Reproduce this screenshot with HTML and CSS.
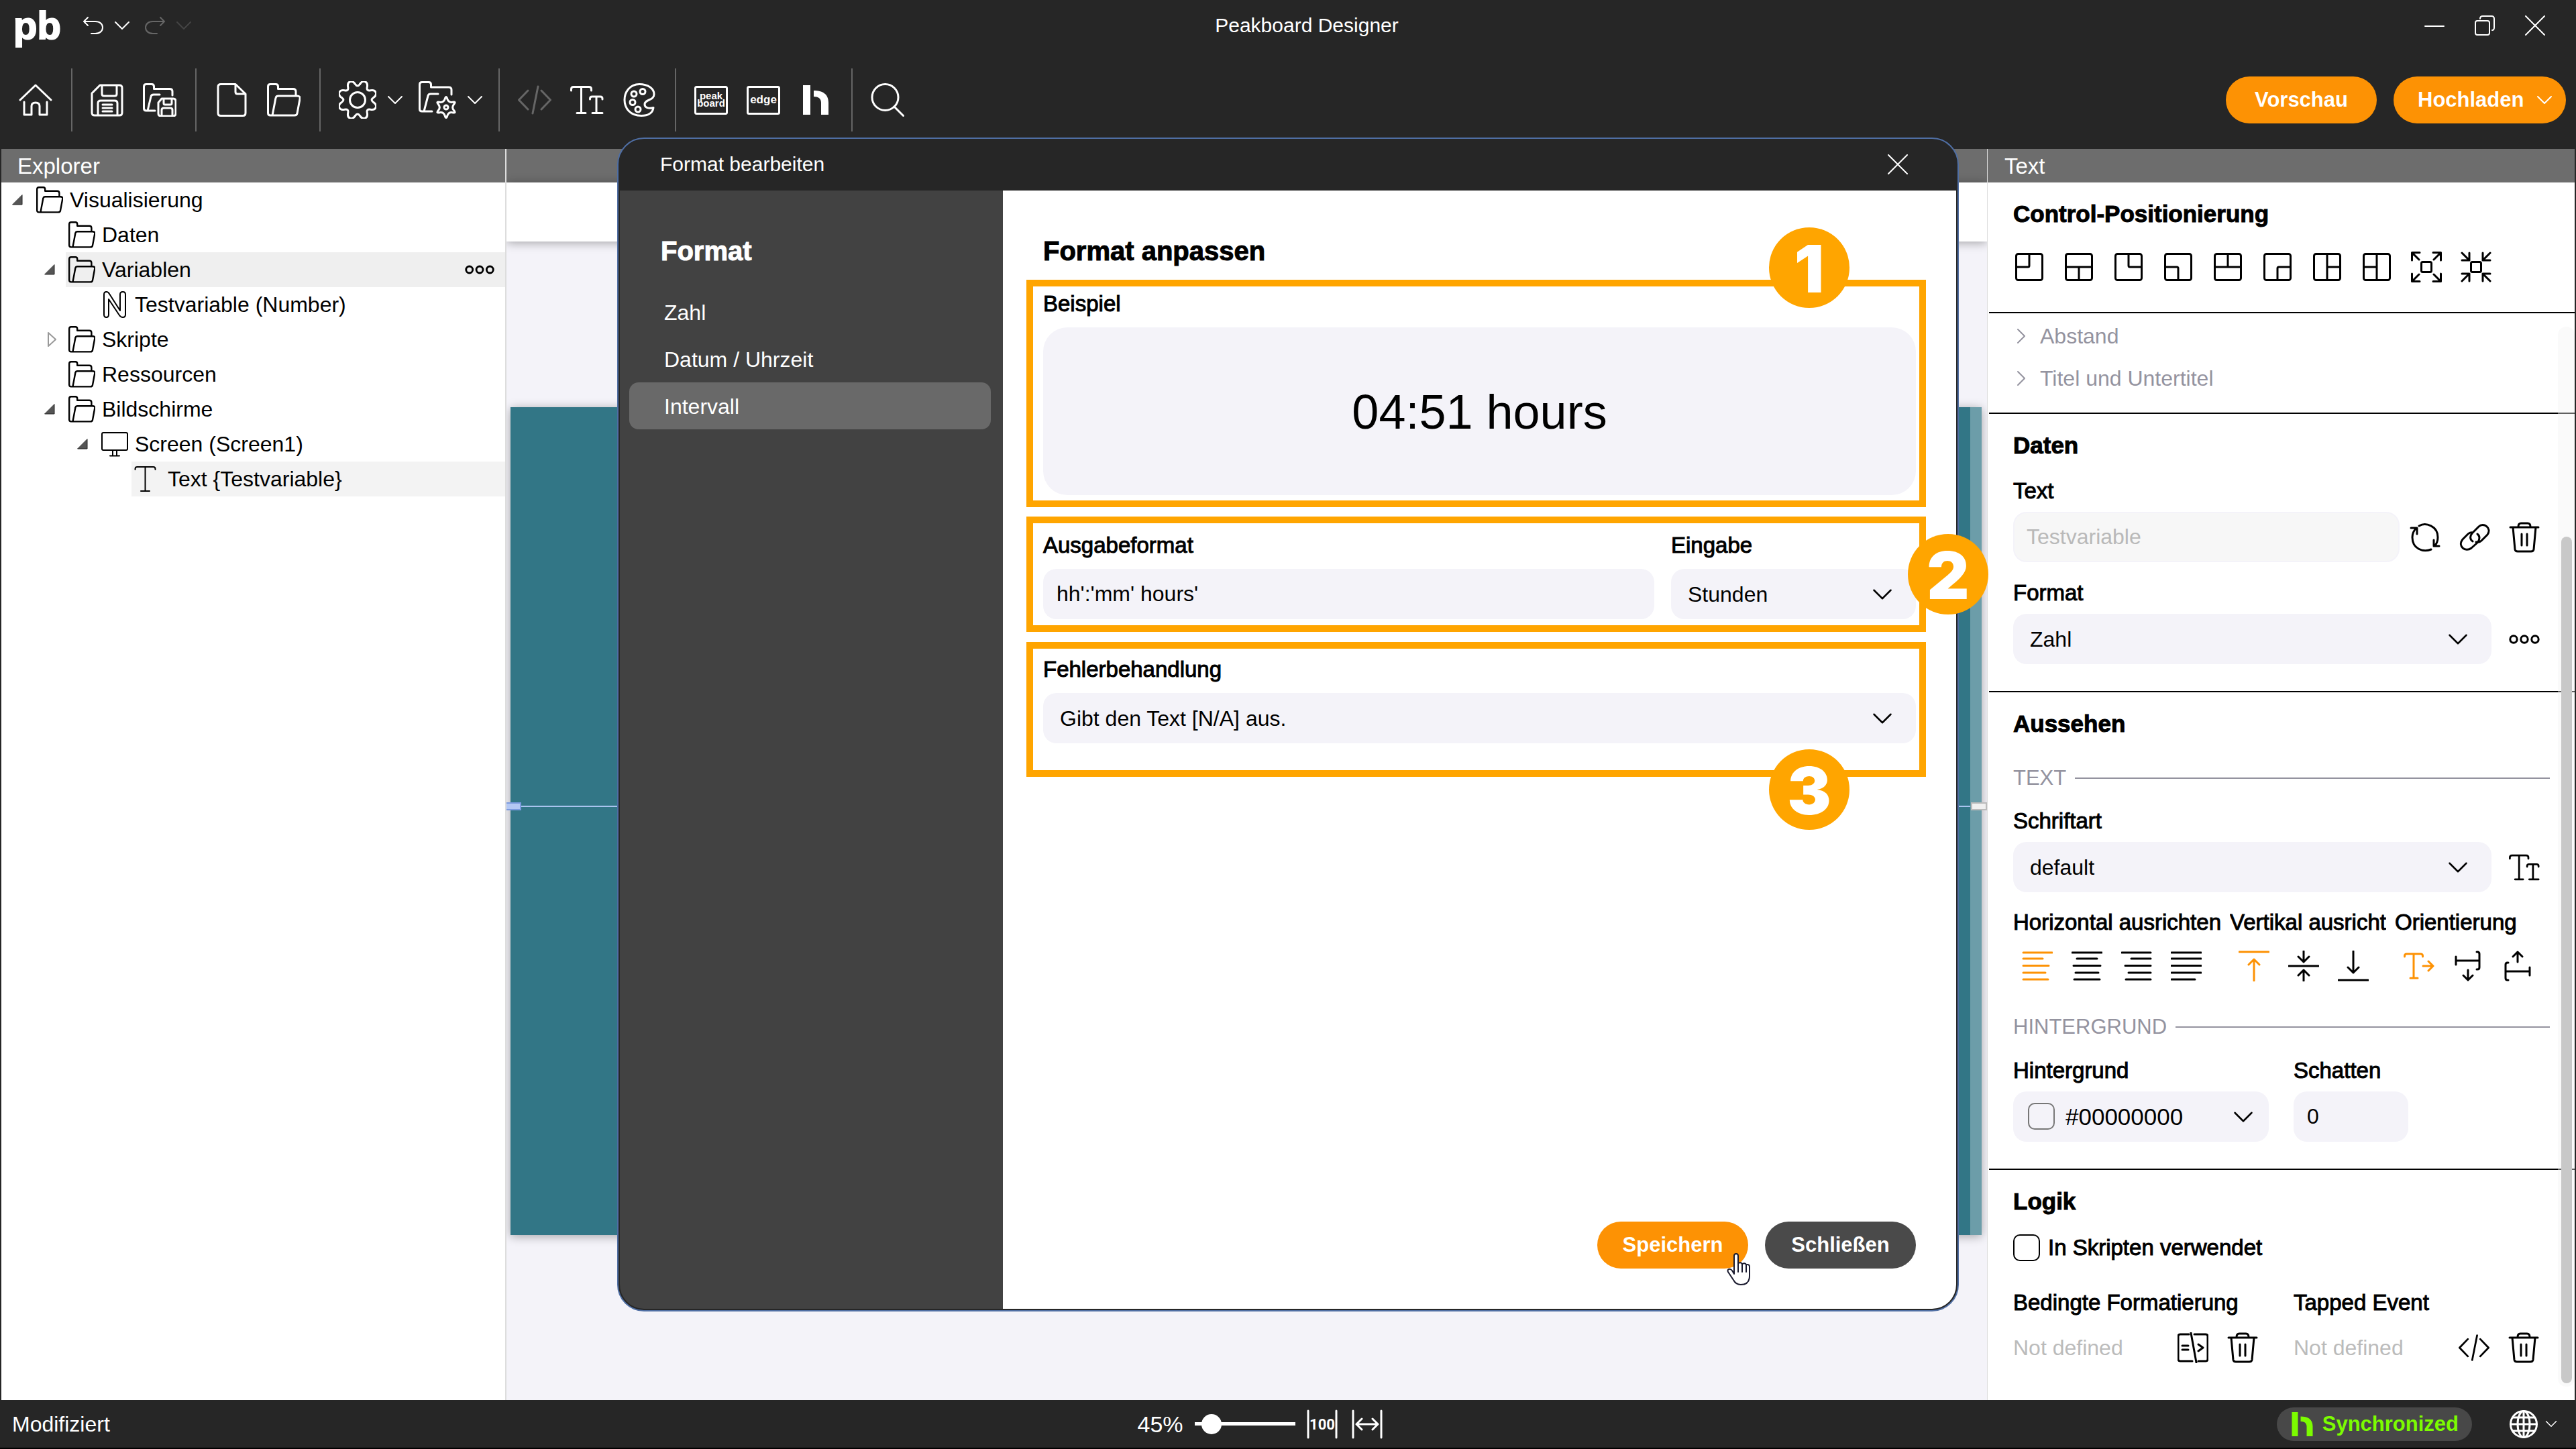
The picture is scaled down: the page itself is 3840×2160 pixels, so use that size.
FILE: index.html
```html
<!DOCTYPE html>
<html lang="de">
<head>
<meta charset="utf-8">
<title>Peakboard Designer</title>
<link rel="stylesheet" href="styles.css">
</head>
<body>
<svg class="sprite" aria-hidden="true">
  <symbol id="chevron" viewBox="0 0 24 14"><path d="M2 2 12 12 22 2"/></symbol>
  <symbol id="undo" viewBox="0 0 32 28"><path d="M8 2 2 8l6 6M2 8h17c7 0 11 4 11 9s-4 9-11 9h-6"/></symbol>
  <symbol id="folder" viewBox="0 0 50 50"><path d="M8 48H5q-3.500 0-3.500-3.500V5q0-3.500 3.500-3.500h8q3.500 0 3.500 3.500v3.500H39q4 0 4 4V19M8 48l5-26q.5-3 4-3h28q5 0 4 4.500l-4 21.500q-.5 3-4 3z"/></symbol>
  <symbol id="home" viewBox="0 0 50 50"><path d="M2 25 25 3l23 22M8 28v19h11V34q0-5 6-5t6 5v13h11V28"/></symbol>
  <symbol id="save" viewBox="0 0 50 50"><path d="M14 3h29q4 0 4 4v37q0 4-4 4H6q-4 0-4-4V15zM17 3v13q0 3 3 3h16q3 0 3-3V3M11 48V30q0-4 4-4h21q4 0 4 4v18M18 32h14M18 37h14M18 42h14"/></symbol>
  <symbol id="save-as" viewBox="0 0 50 50"><path d="M18 41H5q-3.500 0-3.500-3.500V5q0-3.500 3.500-3.500h8q3.500 0 3.500 3.500v3.500H40q4 0 4 4V18M7 41l5-21q.5-3 4-3h9M28 23h17q4 0 4 4v18q0 4-4 4H27q-4 0-4-4V29zM31 23v7q0 2 2 2h8q2 0 2-2v-7M28 49V40q0-3 3-3h10q3 0 3 3v9"/></symbol>
  <symbol id="new" viewBox="0 0 50 50"><path d="M31 1.500H9q-4 0-4 4v39q0 4 4 4h33q4 0 4-4V16zM31 1.500V13q0 3 3 3h12"/></symbol>
  <symbol id="gear" viewBox="0 0 56 56"><g transform="translate(28 28)">
    <path id="gq" d="M3.500-23.700Q7-29 11.300-27.200 15.500-25.500 14.300-19.300 13-13 19.300-14.300 25.500-15.500 27.200-11.300 29-7 23.700-3.500 18.500 0 23.700 3.500"/>
    <use href="#gq" transform="rotate(90)"/><use href="#gq" transform="rotate(180)"/><use href="#gq" transform="rotate(270)"/><circle r="11.500"/></g></symbol>
  <symbol id="folder-gear" viewBox="0 0 56 56"><path d="M20 45H5q-3.500 0-3.500-3.500V5q0-3.500 3.500-3.500h10q3.500 0 3.500 3.500v4H45q4 0 4 4v7M8 45l6-23q.5-3 4-3h11"/><g transform="translate(41 39)"><path d="M-2-12Q0-19 2-12 4-7 9.400-7.700 15.700-9 11.400-4.300 8 0 11.400 4.300 15.700 9 9.400 7.700 4 7 2 12 0 19-2 12-4 7-9.400 7.700-15.700 9-11.400 4.300-8 0-11.400-4.300-15.700-9-9.400-7.700-4-7-2-12z"/><circle r="3"/></g></symbol>
  <symbol id="code" viewBox="0 0 50 50"><path d="M15 11 1.500 25 15 39M35 11l13.500 14L35 39M30 5l-8 40"/></symbol>
  <symbol id="type" viewBox="0 0 50 50"><path d="M1.500 11V9q0-3.500 3.500-3.500h23q3.500 0 3.500 3.500v2M16.500 5.500v39M10 44.500h13M29.500 24v-1q0-3 3-3H45q3 0 3 3v1M39 20v24.500M33 44.500h15"/></symbol>
  <symbol id="palette" viewBox="0 0 50 50"><path d="M25 1.500C11 1.500 3 13 3 25s8 23.500 25 23.500c10 0 17-4 18-12-7 2-13 0-13-5 0-8 14-5 14-15C47 8 38 1.500 25 1.500z"/><circle cx="17" cy="16" r="4"/><circle cx="30" cy="12.500" r="4"/><circle cx="15" cy="28.500" r="4"/><circle cx="23" cy="39" r="4"/></symbol>
  <symbol id="frame" viewBox="0 0 50 50"><rect x="1.500" y="5.500" width="47" height="40" rx="2"/></symbol>
  <symbol id="hub" viewBox="0 0 38 44"><path d="M0 0h11v44H0zM16 8c13 0 22 5 22 18v18H27V26c0-6-4-9-11-9z" fill="currentColor" stroke="none"/></symbol>
  <symbol id="search" viewBox="0 0 50 50"><circle cx="21.500" cy="21" r="19.500"/><path d="m35 35 13.500 13.500"/></symbol>
  <symbol id="dots" viewBox="0 0 46 14"><circle cx="7" cy="7" r="5.200"/><circle cx="23" cy="7" r="5.200"/><circle cx="39" cy="7" r="5.200"/></symbol>
  <symbol id="close" viewBox="0 0 30 30"><path d="m1 1 28 28M29 1 1 29"/></symbol>
  <symbol id="open" viewBox="0 0 16 16"><path d="M15 1v14H1z" fill="#555" stroke="#222"/></symbol>
  <symbol id="shut" viewBox="0 0 16 24"><path d="M2 2v20l11-10z" stroke="#999"/></symbol>
  <symbol id="number" viewBox="0 0 40 40"><path d="M4 35V5q0-4 3.500-4 3 0 4.500 3l16 25V5q0-4 4-4t4 4v30q0 4-4 4-3 0-5-3L11 12v23q0 4-3.500 4T4 35z"/></symbol>
  <symbol id="screen" viewBox="0 0 40 40"><rect x="1" y="3" width="38" height="26" rx="2"/><path d="M17 29v8M23 29v8M13 37.500h14"/></symbol>
  <symbol id="letter" viewBox="0 0 40 40"><path d="M1.500 6V5q0-3 3-3h24q3 0 3 3v1M16.500 2v36M10 38h13"/></symbol>
  <symbol id="box" viewBox="0 0 42 42"><rect x="1.500" y="1.500" width="39" height="39" rx="3"/></symbol>
  <symbol id="p1" viewBox="0 0 42 42"><use href="#box"/><path d="M21 1v18q0 2-2 2H1"/></symbol>
  <symbol id="p2" viewBox="0 0 42 42"><use href="#box"/><path d="M1 21h40M21 21v20"/></symbol>
  <symbol id="p3" viewBox="0 0 42 42"><use href="#box"/><path d="M21 1v18q0 2 2 2h18"/></symbol>
  <symbol id="p4" viewBox="0 0 42 42"><use href="#box"/><path d="M1 21h18q2 0 2 2v18"/></symbol>
  <symbol id="p5" viewBox="0 0 42 42"><use href="#box"/><path d="M1 21h40M21 1v20"/></symbol>
  <symbol id="p6" viewBox="0 0 42 42"><use href="#box"/><path d="M41 21H23q-2 0-2 2v18"/></symbol>
  <symbol id="p7" viewBox="0 0 42 42"><use href="#box"/><path d="M21 1v40M21 21h20"/></symbol>
  <symbol id="p8" viewBox="0 0 42 42"><use href="#box"/><path d="M21 1v40M1 21h20"/></symbol>
  <symbol id="grow" viewBox="0 0 46 46"><rect x="15.500" y="15.500" width="15" height="15" rx="2"/><path d="M1.500 13V1.500H13M2 2l10 10M33 1.500h11.500V13M44 2 34 12M1.500 33v11.500H13M2 44l10-10M33 44.500h11.500V33M44 44 34 34"/></symbol>
  <symbol id="shrink" viewBox="0 0 46 46"><rect x="15.500" y="15.500" width="15" height="15" rx="2"/><path d="M13 2v11H2M2 2l11 11M33 2v11h11M44 2 33 13M2 33h11v11M2 44l11-11M44 33H33v11M44 44 33 33"/></symbol>
  <symbol id="refresh" viewBox="0 0 46 46"><path d="M14 6C24 0 42 6 42 23c0 5-2 10-5 13M32 41C20 46 4 40 4 23 4 18 6 13 10 9M2 9h9v9M44 36h-8v-9"/></symbol>
  <symbol id="link" viewBox="0 0 46 46"><path d="M20 29c-5-3-4-9 0-13l9-9c7-7 20 2 13 12l-9 9c-2 2-5 3-8 2M27 18c4 3 4 8 0 13l-9 8C9 46-3 36 5 26l8-8c2-2 4-3 7-2"/></symbol>
  <symbol id="trash" viewBox="0 0 46 46"><path d="M2 8h42M14 7q0-5 4-5h10q4 0 4 5M6 8l3 33q.5 3 4 3h20q3.500 0 4-3l3-33M19 18v17M27 18v17"/></symbol>
  <symbol id="al" viewBox="0 0 46 46"><path d="M2 3h43M2 12h29M2 22.500h38M2 33h33M2 43h37"/></symbol>
  <symbol id="ac" viewBox="0 0 46 46"><path d="M1 3h44M8 12h30M3 22.500h40M6 33h34M4 43h38"/></symbol>
  <symbol id="ar" viewBox="0 0 46 46"><path d="M1 3h43M15 12h29M6 22.500h38M11 33h33M7 43h37"/></symbol>
  <symbol id="aj" viewBox="0 0 46 46"><path d="M1 3h44M1 12h44M1 22.500h44M1 33h44M1 43h35"/></symbol>
  <symbol id="vt" viewBox="0 0 46 46"><path d="M1 2h44M23 45V13M15 21l8-8 8 8"/></symbol>
  <symbol id="vm" viewBox="0 0 46 46"><path d="M1 23h44M23 1v15M15 9l8 8 8-8M23 45V30M15 37l8-8 8 8"/></symbol>
  <symbol id="vb" viewBox="0 0 46 46"><path d="M1 44h44M23 1v32M15 25l8 8 8-8"/></symbol>
  <symbol id="oh" viewBox="0 0 46 46"><path d="M1.500 9V8q0-3 3-3h21q3 0 3 3v1M15 5v36M10 41h11M29 23h15M37 16l7 7-7 7"/></symbol>
  <symbol id="od" viewBox="0 0 46 46"><path d="M35 2h1q3 0 3 3v20q0 3-3 3h-1M39 15H4M4 9v12M22 29v15M15 37l7 7 7-7"/></symbol>
  <symbol id="ou" viewBox="0 0 46 46"><path d="M8 18H7q-3 0-3 3v20q0 3 3 3h1M4 31h36M40 25v12M22 17V2M15 9l7-7 7 7"/></symbol>
  <symbol id="rule" viewBox="0 0 46 46"><path d="M17 3H4q-3 0-3 3v34q0 3 3 3h18M25 3h17q3 0 3 3v34q0 3-3 3H31M20 1l8 44M7 20h9M7 26h9M31 18l7 5-7 5"/></symbol>
  <symbol id="globe" viewBox="0 0 42 42"><circle cx="21" cy="21" r="19.500"/><ellipse cx="21" cy="21" rx="9" ry="19.500"/><path d="M1.500 21h39M21 1.500v39M5 11h32M5 31h32"/></symbol>
</svg>

<header class="titlebar">
  <span class="logo">pb</span>
  <button class="ic" aria-label="Rückgängig"><svg class="w32"><use href="#undo"/></svg></button>
  <button class="ic" aria-label="Rückgängig-Liste"><svg class="chev"><use href="#chevron"/></svg></button>
  <button class="ic dim" aria-label="Wiederholen" disabled><svg class="w32 flip"><use href="#undo"/></svg></button>
  <button class="ic dimmer" aria-label="Wiederholen-Liste" disabled><svg class="chev"><use href="#chevron"/></svg></button>
  <h1>Peakboard Designer</h1>
  <div class="winctl">
    <button class="ic" aria-label="Minimieren"><svg class="w30" viewBox="0 0 30 30"><path d="M1 16h28"/></svg></button>
    <button class="ic" aria-label="Verkleinern"><svg class="w30" viewBox="0 0 30 30"><rect x="1" y="8" width="21" height="21" rx="3"/><path d="M8 5q0-4 4-4h13q4 0 4 4v13q0 4-3 4"/></svg></button>
    <button class="ic" aria-label="Beenden"><svg class="w30"><use href="#close"/></svg></button>
  </div>
</header>

<nav class="toolbar" aria-label="Werkzeuge">
  <button class="ic" aria-label="Start"><svg class="w50"><use href="#home"/></svg></button>
  <i class="sep"></i>
  <button class="ic" aria-label="Speichern"><svg class="w50"><use href="#save"/></svg></button>
  <button class="ic" aria-label="Speichern unter"><svg class="w50"><use href="#save-as"/></svg></button>
  <i class="sep"></i>
  <button class="ic" aria-label="Neu"><svg class="w50"><use href="#new"/></svg></button>
  <button class="ic" aria-label="Öffnen"><svg class="w50"><use href="#folder"/></svg></button>
  <i class="sep"></i>
  <button class="ic drop" aria-label="Einstellungen"><svg class="w56"><use href="#gear"/></svg><svg class="chev"><use href="#chevron"/></svg></button>
  <button class="ic drop" aria-label="Projekteinstellungen"><svg class="w56"><use href="#folder-gear"/></svg><svg class="chev"><use href="#chevron"/></svg></button>
  <i class="sep"></i>
  <button class="ic dim" aria-label="Skript" disabled><svg class="w50"><use href="#code"/></svg></button>
  <button class="ic" aria-label="Schriften"><svg class="w50"><use href="#type"/></svg></button>
  <button class="ic" aria-label="Farben"><svg class="w50"><use href="#palette"/></svg></button>
  <i class="sep"></i>
  <button class="ic" aria-label="Peakboard"><svg class="w50 badge" viewBox="0 0 50 50"><use href="#frame"/><text x="25" y="24">peak</text><text x="25" y="35">board</text></svg></button>
  <button class="ic" aria-label="Edge"><svg class="w50 badge edge" viewBox="0 0 50 50"><use href="#frame"/><text x="25" y="30">edge</text></svg></button>
  <button class="ic" aria-label="Hub"><svg class="w50 hub"><use href="#hub"/></svg></button>
  <i class="sep"></i>
  <button class="ic" aria-label="Suchen"><svg class="w50"><use href="#search"/></svg></button>
  <div class="actions">
    <button class="pill">Vorschau</button>
    <button class="pill upload">Hochladen <svg class="chev"><use href="#chevron"/></svg></button>
  </div>
</nav>

<main class="workspace">
  <aside class="explorer">
    <h2 class="bar">Explorer</h2>
    <ul class="tree">
      <li class="l0"><svg class="arrow"><use href="#open"/></svg><span class="node"><svg><use href="#folder"/></svg>Visualisierung</span></li>
      <li class="l1"><span class="node"><svg><use href="#folder"/></svg>Daten</span></li>
      <li class="l1"><svg class="arrow"><use href="#open"/></svg><span class="node hover"><svg><use href="#folder"/></svg>Variablen<button class="ic more" aria-label="Mehr"><svg class="dots"><use href="#dots"/></svg></button></span></li>
      <li class="l2"><span class="node"><svg><use href="#number"/></svg>Testvariable (Number)</span></li>
      <li class="l1"><svg class="arrow shut"><use href="#shut"/></svg><span class="node"><svg><use href="#folder"/></svg>Skripte</span></li>
      <li class="l1"><span class="node"><svg><use href="#folder"/></svg>Ressourcen</span></li>
      <li class="l1"><svg class="arrow"><use href="#open"/></svg><span class="node"><svg><use href="#folder"/></svg>Bildschirme</span></li>
      <li class="l2"><svg class="arrow"><use href="#open"/></svg><span class="node"><svg><use href="#screen"/></svg>Screen (Screen1)</span></li>
      <li class="l3"><span class="node picked"><svg><use href="#letter"/></svg>Text {Testvariable}</span></li>
    </ul>
  </aside>

  <section class="stage" aria-label="Bildschirm">
    <div class="bar"></div>
    <div class="ruler"></div>
    <div class="area"><div class="canvas"><i class="guide"></i><i class="grip start"></i><i class="grip end"></i></div></div>
  </section>

  <aside class="props">
    <h2 class="bar">Text</h2>
    <section>
      <h3>Control-Positionierung</h3>
      <div class="positions">
        <button class="ic" aria-label="Oben links"><svg class="w42"><use href="#p1"/></svg></button>
        <button class="ic" aria-label="Unten"><svg class="w42"><use href="#p2"/></svg></button>
        <button class="ic" aria-label="Oben rechts"><svg class="w42"><use href="#p3"/></svg></button>
        <button class="ic" aria-label="Unten links"><svg class="w42"><use href="#p4"/></svg></button>
        <button class="ic" aria-label="Oben"><svg class="w42"><use href="#p5"/></svg></button>
        <button class="ic" aria-label="Unten rechts"><svg class="w42"><use href="#p6"/></svg></button>
        <button class="ic" aria-label="Rechts"><svg class="w42"><use href="#p7"/></svg></button>
        <button class="ic" aria-label="Links"><svg class="w42"><use href="#p8"/></svg></button>
        <button class="ic" aria-label="Vergrößern"><svg class="w46"><use href="#grow"/></svg></button>
        <button class="ic" aria-label="Verkleinern"><svg class="w46"><use href="#shrink"/></svg></button>
      </div>
    </section>
    <section class="folds">
      <button class="fold"><svg class="chev"><use href="#chevron"/></svg>Abstand</button>
      <button class="fold"><svg class="chev"><use href="#chevron"/></svg>Titel und Untertitel</button>
    </section>
    <section>
      <h3>Daten</h3>
      <label class="lbl first" for="text">Text</label>
      <div class="row tight">
        <input class="field" id="text" value="Testvariable" disabled>
        <button class="ic" aria-label="Aktualisieren"><svg class="w46"><use href="#refresh"/></svg></button>
        <button class="ic" aria-label="Verknüpfen"><svg class="w46"><use href="#link"/></svg></button>
        <button class="ic" aria-label="Löschen"><svg class="w46"><use href="#trash"/></svg></button>
      </div>
      <label class="lbl" for="format">Format</label>
      <div class="row">
        <span class="select"><select class="field" id="format"><option>Zahl</option></select><svg class="chev"><use href="#chevron"/></svg></span>
        <button class="ic" aria-label="Format bearbeiten"><svg class="dots"><use href="#dots"/></svg></button>
      </div>
    </section>
    <section>
      <h3>Aussehen</h3>
      <h4>TEXT</h4>
      <label class="lbl" for="font">Schriftart</label>
      <div class="row">
        <span class="select"><select class="field" id="font"><option>default</option></select><svg class="chev"><use href="#chevron"/></svg></span>
        <button class="ic" aria-label="Schriften"><svg class="w46"><use href="#type"/></svg></button>
      </div>
      <div class="aligns">
        <div class="group h"><span class="lbl">Horizontal ausrichten</span><div class="set">
          <button class="ic on" aria-label="Links"><svg class="w46"><use href="#al"/></svg></button>
          <button class="ic" aria-label="Zentriert"><svg class="w46"><use href="#ac"/></svg></button>
          <button class="ic" aria-label="Rechts"><svg class="w46"><use href="#ar"/></svg></button>
          <button class="ic" aria-label="Blocksatz"><svg class="w46"><use href="#aj"/></svg></button></div></div>
        <div class="group v"><span class="lbl">Vertikal ausrichten</span><div class="set">
          <button class="ic on" aria-label="Oben"><svg class="w46"><use href="#vt"/></svg></button>
          <button class="ic" aria-label="Mitte"><svg class="w46"><use href="#vm"/></svg></button>
          <button class="ic" aria-label="Unten"><svg class="w46"><use href="#vb"/></svg></button></div></div>
        <div class="group o"><span class="lbl">Orientierung</span><div class="set">
          <button class="ic on" aria-label="Waagerecht"><svg class="w46"><use href="#oh"/></svg></button>
          <button class="ic" aria-label="Abwärts"><svg class="w46"><use href="#od"/></svg></button>
          <button class="ic" aria-label="Aufwärts"><svg class="w46"><use href="#ou"/></svg></button></div></div>
      </div>
      <h4 class="second">HINTERGRUND</h4>
      <div class="cols">
        <div><label class="lbl" for="bg">Hintergrund</label>
          <span class="select swatched"><i class="swatch"></i><select class="field" id="bg"><option>#00000000</option></select><svg class="chev"><use href="#chevron"/></svg></span></div>
        <div><label class="lbl" for="shadow">Schatten</label>
          <input class="field short" id="shadow" value="0"></div>
      </div>
    </section>
    <section class="last">
      <h3>Logik</h3>
      <label class="check"><input type="checkbox">In Skripten verwendet</label>
      <div class="cols logic">
        <div><span class="lbl">Bedingte Formatierung</span>
          <div class="undef"><span>Not defined</span><button class="ic" aria-label="Regel"><svg class="w46"><use href="#rule"/></svg></button><button class="ic" aria-label="Löschen"><svg class="w46"><use href="#trash"/></svg></button></div></div>
        <div><span class="lbl">Tapped Event</span>
          <div class="undef"><span>Not defined</span><button class="ic" aria-label="Skript"><svg class="w46"><use href="#code"/></svg></button><button class="ic" aria-label="Löschen"><svg class="w46"><use href="#trash"/></svg></button></div></div>
      </div>
    </section>
    <div class="scroll"><i></i></div>
  </aside>
</main>

<footer class="status">
  <span class="state">Modifiziert</span>
  <div class="zoom">
    <label for="zoom">45%</label>
    <input id="zoom" type="range" min="0" max="100" value="9">
    <button class="ic" aria-label="100 Prozent"><svg class="w46 hundred" viewBox="0 0 46 46"><path d="M2 3v40M44 3v40"/><text x="23" y="31">100</text></svg></button>
    <button class="ic" aria-label="Einpassen"><svg class="w46" viewBox="0 0 46 46"><path d="M2 3v40M44 3v40M7 23h32M15 15l-8 8 8 8M31 15l8 8-8 8"/></svg></button>
  </div>
  <div class="right">
    <span class="sync"><svg><use href="#hub"/></svg>Synchronized</span>
    <button class="ic lang" aria-label="Sprache"><svg class="w42"><use href="#globe"/></svg><svg class="chev"><use href="#chevron"/></svg></button>
  </div>
</footer>

<div class="overlay">
  <div class="dialog" role="dialog" aria-labelledby="dlg">
    <header><span id="dlg">Format bearbeiten</span><button class="ic" aria-label="Dialog schließen"><svg class="w30"><use href="#close"/></svg></button></header>
    <div class="split">
      <nav class="formats">
        <h2>Format</h2>
        <button>Zahl</button>
        <button>Datum / Uhrzeit</button>
        <button class="active">Intervall</button>
      </nav>
      <form class="content">
        <h2>Format anpassen</h2>
        <div class="mark m1"><b class="num">1</b>
          <label class="lbl" for="sample">Beispiel</label>
          <output class="sample" id="sample">04:51 hours</output>
        </div>
        <div class="mark m2"><b class="num">2</b>
          <div class="wide"><label class="lbl" for="out">Ausgabeformat</label><input class="field" id="out" value="hh':'mm' hours'"></div>
          <div class="slim"><label class="lbl" for="unit">Eingabe</label><span class="select"><select class="field" id="unit"><option>Stunden</option></select><svg class="chev"><use href="#chevron"/></svg></span></div>
        </div>
        <div class="mark m3"><b class="num">3</b>
          <label class="lbl" for="err">Fehlerbehandlung</label>
          <span class="select"><select class="field" id="err"><option>Gibt den Text [N/A] aus.</option></select><svg class="chev"><use href="#chevron"/></svg></span>
        </div>
        <div class="buttons">
          <button type="button" class="pill save">Speichern
            <svg class="cursor" viewBox="0 0 36 48"><path d="M11 31V4c0-4 6-4 6 0v12c1-3 6-2 6 1 1-3 6-2 6 1 1-2 5-1 5 2v14c0 9-5 13-13 13-6 0-9-3-11-7L2 28c-2-4 3-6 6-2zM17 16v12M23 17v11M29 18v10"/></svg></button>
          <button type="button" class="pill dark">Schließen</button>
        </div>
      </form>
    </div>
  </div>
</div>
</body>
</html>
```

FILE: styles.css
```css
* { box-sizing: border-box; }
body {
  margin: 0;
  min-height: 100vh;
  display: flex;
  flex-direction: column;
  background: #262626;
  color: #000;
  font: 32px/40px "Liberation Sans", Arial, sans-serif;
}
h1, h2, h3, h4, ul { margin: 0; padding: 0; font-weight: 400; }
button, input, select { font: inherit; color: inherit; }
svg {
  display: block;
  flex: none;
  fill: none;
  stroke: currentColor;
  stroke-width: 3;
  stroke-linecap: round;
  stroke-linejoin: round;
  overflow: visible;
}
.sprite { position: absolute; width: 0; height: 0; }
.ic { display: flex; align-items: center; flex: none; padding: 0; border: 0; background: none; }
.w30 { width: 30px; height: 30px; stroke-width: 2; }
.w32 { width: 32px; height: 28px; stroke-width: 2; }
.w42 { width: 42px; height: 42px; }
.w46 { width: 46px; height: 46px; }
.w50 { width: 50px; height: 50px; }
.w56 { width: 56px; height: 56px; }
.chev { width: 24px; height: 14px; stroke-width: 2; }
.dots { width: 46px; height: 14px; }
.flip { transform: scaleX(-1); }

/* Title bar and toolbar */
.titlebar { position: relative; display: flex; align-items: center; height: 76px; padding: 0 46px 0 20px; color: #fff; }
.titlebar .ic { margin-right: 15px; }
.titlebar .ic.dim { margin-left: 6px; }
.logo { width: 103px; font-size: 58px; font-weight: 700; line-height: 64px; -webkit-text-stroke: 2px; }
.titlebar h1 { position: absolute; inset: 18px 0 auto; text-align: center; font-size: 30px; padding-left: 56px; pointer-events: none; }
.titlebar .winctl { display: flex; gap: 45px; margin-left: auto; }
.titlebar .winctl .ic { margin: 0; }
.dim { color: #666; }
.dimmer { color: #444; }
.toolbar { display: flex; align-items: center; gap: 28px; height: 146px; padding: 0 15px 0 28px; color: #fff; }
.toolbar .sep { width: 2px; height: 94px; margin-right: -1px; background: #666; }
.drop { gap: 16px; margin-right: -5px; }
.badge text { fill: #fff; stroke: none; font: 700 15px "Liberation Sans", sans-serif; text-anchor: middle; }
.badge.edge text { font-size: 17px; }
.w50.hub { height: 44px; }
.actions { display: flex; gap: 25px; margin-left: auto; }
.pill {
  position: relative;
  width: 225px;
  height: 70px;
  padding: 0;
  border: 0;
  border-radius: 35px;
  background: #fd9204;
  color: #fff;
  font-size: 31px;
  font-weight: 700;
}
.pill.upload { display: flex; align-items: center; justify-content: space-between; width: 257px; padding: 0 20px 0 36px; }
.pill.dark { background: #4a4a4a; }

/* Workspace */
.workspace { flex: 1; display: flex; padding: 0 2px; }
.bar { height: 50px; background: #6d6d6d; color: #fff; line-height: 52px; }
.explorer { width: 753px; border-right: 2px solid #ddd; background: #fff; }
.explorer .bar { padding-left: 24px; font-size: 33px; }
.tree { list-style: none; }
.tree li { display: flex; align-items: center; justify-content: flex-end; height: 52px; }
.tree .node { display: flex; align-items: center; gap: 10px; height: 52px; padding-left: 4px; }
.tree .node > svg { width: 40px; height: 40px; stroke-width: 2; }
.arrow { width: 16px; height: 16px; margin-right: 16px; stroke-width: 1; }
.arrow.shut { width: 16px; height: 24px; margin-right: 12px; stroke-width: 2; }
.l0 .node { width: 703px; }
.l1 .node { width: 655px; }
.l2 .node { width: 606px; }
.l3 .node { width: 557px; }
.tree use[href="#folder"] { stroke-width: 3; }
.node.hover { background: #efefef; }
.node.picked { background: #f3f3f3; }
.more { margin: 0 16px 0 auto; }
.more .dots { width: 44px; }

.stage { flex: 1; min-width: 0; display: flex; flex-direction: column; background: #f4f3f9; overflow: hidden; }
.ruler { height: 88px; background: #fff; box-shadow: 0 2px 14px #0005; }
.area { flex: 1; display: flex; align-items: center; padding: 0 8px 0 6px; }
.canvas { position: relative; flex: 1; height: 1234px; border-right: 17px solid #6c9da9; background: #327686; box-shadow: 0 2px 14px #0005; }
.guide { position: absolute; left: 0; right: 0; top: 594px; height: 2px; background: #a9c4ee; }
.grip { position: absolute; top: 589px; width: 24px; height: 12px; border: 2px solid #bbb; background: #f0f0f0; }
.grip.start { left: -8px; border-color: #7c9be0; background: #b4c8f4; }
.grip.end { right: -25px; }

/* Properties */
.props { position: relative; width: 876px; border-left: 1px solid #ddd; background: #fff; }
.props .bar { padding-left: 25px; font-size: 33px; }
.props section { margin-left: 2px; padding: 25px 37px 40px 36px; border-bottom: 2px solid #000; }
.props section:first-of-type { padding-bottom: 46px; }
.props section.folds { padding-top: 12px; padding-bottom: 29px; }
.props section.last { border: 0; }
h3 { font-size: 35px; font-weight: 700; line-height: 44px; -webkit-text-stroke: 1px; }
h4 { display: flex; align-items: center; gap: 13px; margin: 39px 0 24px; color: #94939f; font-size: 31px; }
h4::after { content: ""; flex: 1; height: 2px; background: #94939f; }
h4.second { margin: 48px 0 25px; }
.positions { display: flex; align-items: center; gap: 32px; height: 42px; margin: 36px 0 0 3px; }
.positions .ic { width: 42px; justify-content: center; }
.fold { display: flex; align-items: center; gap: 16px; height: 44px; padding: 0; border: 0; background: none; color: #94939f; }
.fold + .fold { margin-top: 19px; }
.fold .chev { transform: rotate(-90deg); }
.lbl { display: block; margin-bottom: 11px; font-size: 33px; line-height: 40px; white-space: nowrap; -webkit-text-stroke: 1px; }
.lbl.first { margin-top: 26px; }
.row + .lbl { margin-top: 26px; }
.row { display: flex; align-items: center; gap: 26px; padding-right: 15px; }
.row.tight { gap: 28px; }
.row.tight .field { margin-right: -13px; }
.field { width: 100%; min-width: 0; height: 75px; padding: 0 20px; border: 0; border-radius: 20px; background: #f4f3f9; appearance: none; opacity: 1; }
input.field:disabled { border: 2px solid #f4f3f9; background: #f7f7f7; color: #b9b9b9; padding: 0 18px; }
select.field { padding: 0 25px; }
.select { position: relative; display: block; flex: 1; }
.select .field { display: block; }
.select .chev { position: absolute; right: 35px; top: 29px; width: 30px; height: 18px; pointer-events: none; }
.aligns { display: flex; margin-top: 25px; }
.aligns .lbl { margin-bottom: 22px; overflow: hidden; }
.group.h { width: 323px; }
.group.v { width: 246px; }
.group.v .lbl { width: 233px; }
.set { display: flex; gap: 28px; padding-left: 13px; }
.on { color: #fd9204; }
.cols { display: grid; grid-template-columns: 381px 1fr; column-gap: 37px; }
.swatch { position: absolute; left: 22px; top: 17px; width: 40px; height: 40px; border: 2px solid #777; border-radius: 10px; }
.swatched .field { padding-left: 78px; font-size: 35px; }
.swatched .chev { right: 23px; }
.field.short { width: 171px; }
.check { display: flex; align-items: center; gap: 12px; margin-top: 27px; font-size: 33px; -webkit-text-stroke: 1px; }
.check input { appearance: none; width: 40px; height: 40px; margin: 0; border: 2px solid #000; border-radius: 10px; }
.logic { margin-top: 42px; }
.logic .lbl { margin-bottom: 24px; }
.undef { display: flex; align-items: center; gap: 28px; padding-right: 16px; color: #bbb; }
.undef span { margin-right: auto; }
.undef .ic { color: #000; }
.scroll { position: absolute; right: 0; top: 265px; bottom: 20px; width: 25px; padding: 313px 4px 5px 5px; border-radius: 12px; background: #f3f3f366; }
.scroll i { display: block; height: 100%; border-radius: 8px; background: #c8c8c8; }

/* Status bar */
.status { display: grid; grid-template-columns: 1fr auto 1fr; align-items: center; height: 73px; padding: 0 28px 0 18px; border-bottom: 2px solid #000; color: #fff; }
.status .chev { width: 18px; height: 11px; }
.zoom { display: flex; align-items: center; font-size: 34px; margin-right: 74px; }
.zoom input { appearance: none; width: 150px; height: 30px; margin: 0 17px; background: linear-gradient(#fff, #fff) center / 100% 5px no-repeat; }
.zoom input::-webkit-slider-thumb { appearance: none; width: 30px; height: 30px; border-radius: 50%; background: #fff; }
.zoom .ic + .ic { margin-left: 21px; }
.hundred text { fill: #fff; stroke: none; font: 700 22px Roboto, sans-serif; text-anchor: middle; }
.right { display: flex; justify-content: flex-end; gap: 56px; }
.sync { display: flex; align-items: center; gap: 14px; height: 50px; padding: 0 20px 0 22px; border-radius: 25px; background: #484848; color: #7cfc00; font-size: 31px; font-weight: 700; }
.sync svg { width: 32px; height: 36px; }
.lang { gap: 11px; }

/* Dialog */
.overlay { position: fixed; inset: 0; display: flex; align-items: center; justify-content: center; }
.dialog { display: flex; flex-direction: column; width: 2000px; max-width: 90%; height: 1750px; max-height: 90%; padding: 0 2px 2px; border: 2px solid #4f6ea3; border-radius: 40px; background: #262626; }
.dialog header { display: flex; align-items: center; justify-content: space-between; flex: none; height: 77px; padding: 0 72px 2px 60px; color: #fff; font-size: 30px; }
.split { flex: 1; display: flex; }
.formats { width: 571px; padding: 60px 18px 0 14px; border-radius: 0 0 0 36px; background: #424242; color: #fff; }
.dialog h2 { font-size: 40px; font-weight: 700; line-height: 60px; -webkit-text-stroke: 1px; }
.formats h2 { margin: 0 0 26px 47px; }
.formats button { display: block; width: 100%; height: 70px; padding: 2px 52px 0; border: 0; border-radius: 14px; background: none; text-align: left; }
.formats .active { background: #696969; }
.content { flex: 1; display: flex; flex-direction: column; padding: 60px 45px 60px 35px; border-radius: 0 0 36px 0; background: #fff; }
.content h2 { margin: 0 0 13px 25px; }
.mark { position: relative; padding: 6px 5px 8px 15px; border: 10px solid #ffa500; }
.mark .lbl { margin-bottom: 15px; }
.m2 { display: flex; gap: 25px; margin: 14px 0 15px; padding: 13px 5px 9px 15px; }
.m2 .wide { flex: 1; }
.m2 .slim { width: 365px; }
.m3 { padding: 11px 5px 40px 15px; }
.sample { display: flex; align-items: center; justify-content: center; height: 250px; padding-top: 2px; border-radius: 36px; background: #f4f3f9; font-size: 72px; }
.num { position: absolute; z-index: 1; top: -88px; right: 104px; width: 120px; height: 120px; border-radius: 50%; background: #ffa500; color: #fff; font: 900 98px/124px Inter, sans-serif; text-align: center; }
.m2 .num { top: 16px; right: -103px; }
.m3 .num { top: auto; bottom: -89px; }
.buttons { display: flex; justify-content: flex-end; gap: 25px; margin-top: auto; padding-right: 15px; }
.cursor { position: absolute; right: -4px; bottom: -25px; width: 36px; height: 48px; fill: #fff; stroke: #1a1a2e; stroke-width: 2; }
```
